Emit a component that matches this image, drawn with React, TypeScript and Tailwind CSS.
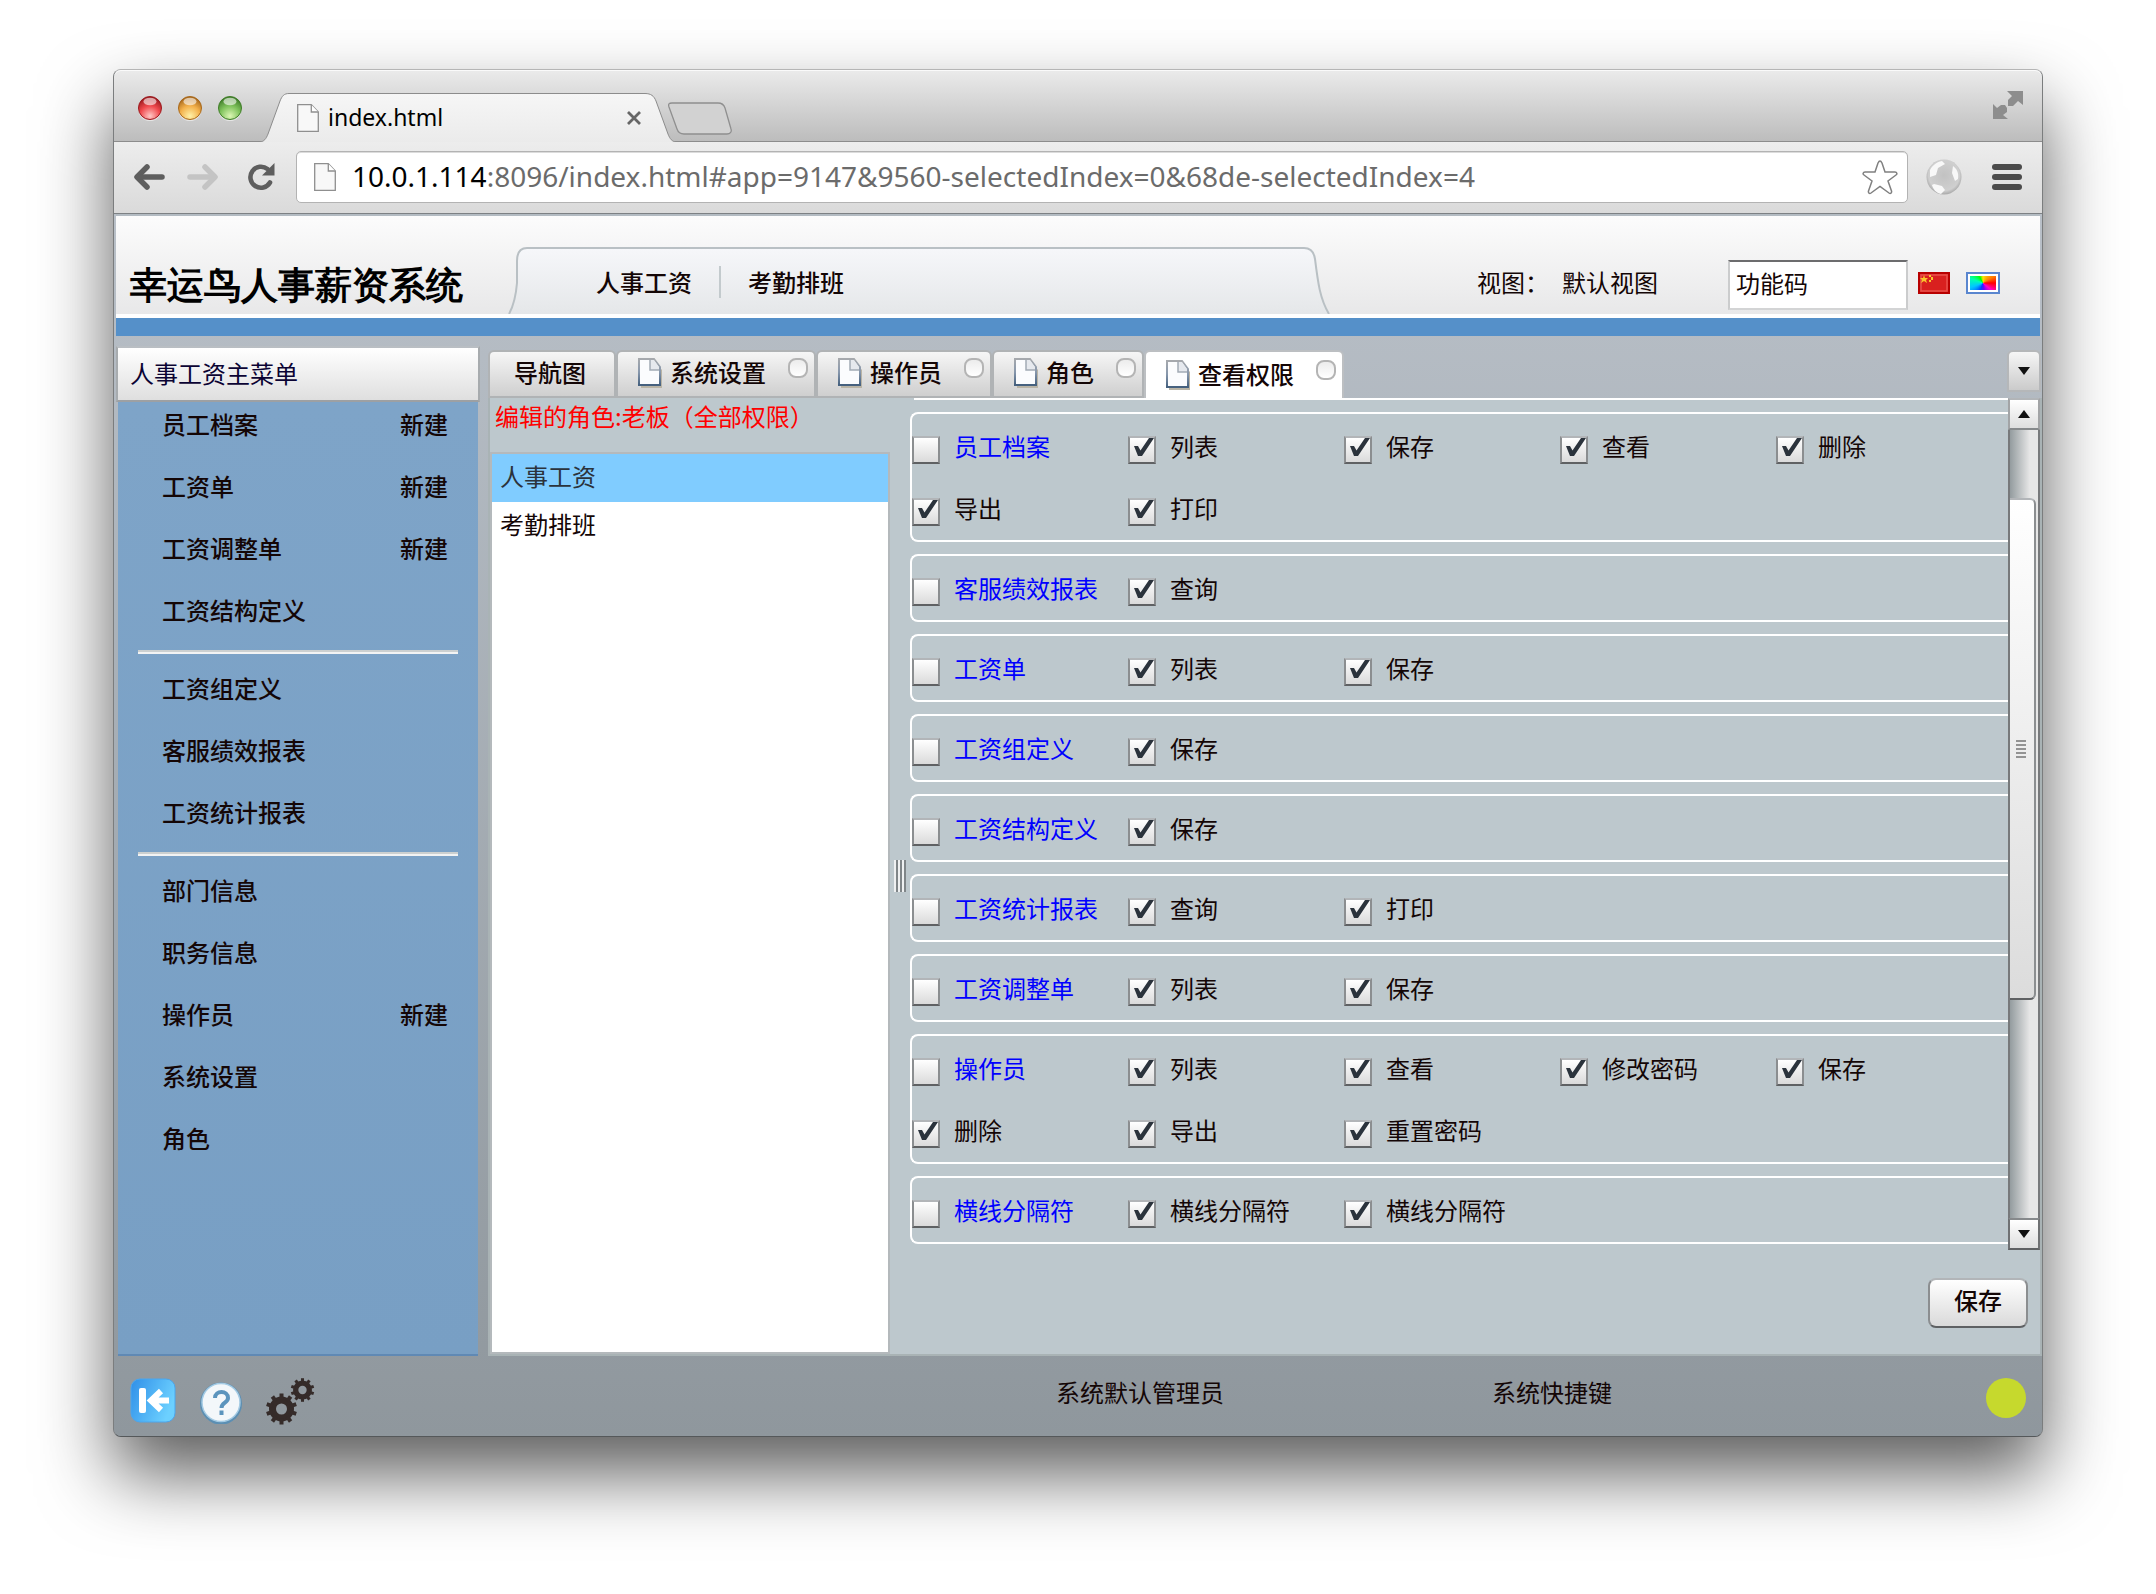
import { useState } from 'react'

type MenuEntry = { name: string; create?: boolean }
type Group = { name: string; rows: string[][] }

const MENU: MenuEntry[][] = [
  [
    { name: '员工档案', create: true },
    { name: '工资单', create: true },
    { name: '工资调整单', create: true },
    { name: '工资结构定义' },
  ],
  [{ name: '工资组定义' }, { name: '客服绩效报表' }, { name: '工资统计报表' }],
  [
    { name: '部门信息' },
    { name: '职务信息' },
    { name: '操作员', create: true },
    { name: '系统设置' },
    { name: '角色' },
  ],
]

const TABS = ['导航图', '系统设置', '操作员', '角色', '查看权限']

const MODULES = ['人事工资', '考勤排班']

const GROUPS: Group[] = [
  { name: '员工档案', rows: [['列表', '保存', '查看', '删除'], ['导出', '打印']] },
  { name: '客服绩效报表', rows: [['查询']] },
  { name: '工资单', rows: [['列表', '保存']] },
  { name: '工资组定义', rows: [['保存']] },
  { name: '工资结构定义', rows: [['保存']] },
  { name: '工资统计报表', rows: [['查询', '打印']] },
  { name: '工资调整单', rows: [['列表', '保存']] },
  { name: '操作员', rows: [['列表', '查看', '修改密码', '保存'], ['删除', '导出', '重置密码']] },
  { name: '横线分隔符', rows: [['横线分隔符', '横线分隔符']] },
]

function TrafficLight({ id, dark, mid, light }: { id: string; dark: string; mid: string; light: string }) {
  return (
    <button aria-label={id} className="block h-[26px] w-6">
      <svg viewBox="0 0 24 26" className="h-full w-full">
        <defs>
          <radialGradient id={id} cx="0.5" cy="0.85" r="0.8">
            <stop offset="0" stopColor={light} />
            <stop offset="0.55" stopColor={mid} />
            <stop offset="1" stopColor={dark} />
          </radialGradient>
        </defs>
        <circle cx="12" cy="13.5" r="11.5" fill="#fff" opacity="0.5" />
        <circle cx="12" cy="12" r="11.5" fill={`url(#${id})`} stroke={dark} />
        <ellipse cx="12" cy="5.5" rx="6.5" ry="3.8" fill="#fff" opacity="0.6" />
      </svg>
    </button>
  )
}

function PageIcon({ className }: { className: string }) {
  return (
    <svg viewBox="0 0 22 30" className={className}>
      <path d="M0.7 1.7h13.6l7 7.3v19.3H0.7z" fill="#f8f8f8" stroke="#8f8f8f" strokeWidth="1.3" />
      <path d="M14.3 1.7v7.3h7" fill="#fff" stroke="#8f8f8f" strokeWidth="1.3" />
    </svg>
  )
}

function DocIcon() {
  return (
    <svg viewBox="0 0 24 30" className="h-[30px] w-6 shrink-0">
      <defs>
        <linearGradient id="doc-edge" x1="0" y1="0" x2="0" y2="1">
          <stop offset="0" stopColor="#a6a9ad" />
          <stop offset="0.5" stopColor="#8797ac" />
          <stop offset="1" stopColor="#46617f" />
        </linearGradient>
      </defs>
      <path d="M3 30V4h14l7 8v18z" fill="#b9b4a6" />
      <path d="M1 1h15l6 8v18H1z" fill="#fbfcfe" stroke="url(#doc-edge)" strokeWidth="2" />
      <path d="M0 27h22" stroke="#46617f" strokeWidth="2" />
      <path d="M12 2v10h9V9l-5-7z" fill="#e6e9ee" />
      <path d="M12 2v10h9" fill="none" stroke="#a3aab5" strokeWidth="1.500" />
    </svg>
  )
}

function BrowserTabs() {
  return (
    <div className="flex h-[72px] items-end rounded-t-[7px] bg-gradient-to-b from-[#ebebeb] to-[#bcbcbc] shadow-[inset_0_1px_0_#fafafa,inset_0_-1px_0_#8c8c8c]">
      <div className="flex w-[146px] gap-4 self-start pt-[26px] pl-6">
        <TrafficLight id="close" dark="#9c1a1e" mid="#f0494d" light="#ffc9c6" />
        <TrafficLight id="minimize" dark="#a8681b" mid="#f3b04a" light="#fff2a8" />
        <TrafficLight id="zoom" dark="#3f7d28" mid="#7fc25c" light="#dcf7b4" />
      </div>
      <div className="relative flex h-[49px] w-[416px] items-center pr-[34px] pl-[37px]">
        <svg viewBox="0 0 416 49" className="absolute inset-0 h-full w-full">
          <defs>
            <linearGradient id="tab" x1="0" y1="0" x2="0" y2="1">
              <stop offset="0" stopColor="#f6f6f6" />
              <stop offset="1" stopColor="#ebebeb" />
            </linearGradient>
          </defs>
          <path
            d="M0 49C4 48.500 6 46 8 41L20 8C22 3 24 0.500 29 0.500H385C391 0.500 394 3 396 8L408 41C410 46 412 48.500 416 49"
            fill="url(#tab)"
            stroke="#8c8c8c"
          />
        </svg>
        <PageIcon className="relative h-[30px] w-[22px]" />
        <span className="relative ml-[9px] flex-1 text-[23px] text-black">index.html</span>
        <button aria-label="Close tab" className="relative">
          <svg viewBox="0 0 16 16" className="h-4 w-4">
            <path d="M2 2l12 12M14 2L2 14" stroke="#666" strokeWidth="2.800" />
          </svg>
        </button>
      </div>
      <button aria-label="New tab" className="-ml-2 self-start pt-8">
        <svg viewBox="0 0 64 33" className="h-[33px] w-16">
          <path
            d="M4 1H50C54 1 56 3 57 6L63 27C64 30 62 32 59 32H16C12 32 10 30 9 27L1 5C0 2 1 1 4 1z"
            fill="#d2d2d2"
            stroke="#8f8f8f"
            strokeWidth="1.300"
          />
        </svg>
      </button>
      <button aria-label="Full screen" className="mr-[19px] ml-auto self-start pt-[21px]">
        <svg viewBox="0 0 30 28" className="h-7 w-[30px]" fill="#8d8d8d">
          <path d="M14 0h16v14l-5-4-5 5h-5V9l4-4z" />
          <path d="M0 28V13l4 4 4-3 4 0 2 3v4l-4 3 5 4z" />
        </svg>
      </button>
    </div>
  )
}

function Toolbar() {
  return (
    <div className="flex h-[72px] items-center border-b border-[#7d8184] bg-gradient-to-b from-[#ededed] to-[#dadada] pr-5 pb-[2px] pl-[18px]">
      <button aria-label="Back">
        <svg viewBox="0 0 34 28" className="h-7 w-[34px]" fill="none" stroke="#5e5e5e" strokeWidth="5.500" strokeLinecap="round">
          <path d="M15 4L5 14l10 10" strokeLinejoin="round" />
          <path d="M6 14h24" />
        </svg>
      </button>
      <button aria-label="Forward" className="ml-5">
        <svg viewBox="0 0 34 28" className="h-7 w-[34px]" fill="none" stroke="#c4c4c4" strokeWidth="5.500" strokeLinecap="round">
          <path d="M19 4l10 10-10 10" strokeLinejoin="round" />
          <path d="M28 14H4" />
        </svg>
      </button>
      <button aria-label="Reload" className="ml-[27px]">
        <svg viewBox="0 0 28 28" className="h-7 w-7">
          <path d="M23 19.500A10.500 10.500 0 1 1 20.500 6" fill="none" stroke="#5e5e5e" strokeWidth="4.600" strokeLinecap="round" />
          <path d="M27.500 0v12.500H15z" fill="#5e5e5e" />
        </svg>
      </button>
      <div className="ml-[21px] flex h-[52px] flex-1 items-center rounded-[5px] border border-[#b3b3b3] bg-white pr-[9px] pl-[17px] shadow-[inset_0_1px_0_#dcdcdc]">
        <PageIcon className="h-[30px] w-[22px]" />
        <div className="ml-4 flex-1 pb-[2px] text-[28px] whitespace-nowrap text-[#6b6b6b]">
          <span className="text-black">10.0.1.114</span>:8096/index.html#app=9147&amp;9560-selectedIndex=0&amp;68de-selectedIndex=4
        </div>
        <button aria-label="Bookmark">
          <svg viewBox="0 0 36 36" className="h-9 w-9">
            <path
              d="M18 2c1 0 1.500 1 2 2l3 9 10 0c2 0 2.500 2 1 3l-8 6 3.500 10c.5 2-1 3-2.500 2L18 27.500 9 34c-1.500 1-3 0-2.500-2L10 22l-8-6c-1.500-1-1-3 1-3h10l3-9c.5-1 1-2 2-2z"
              fill="#fff"
              stroke="#808080"
              strokeWidth="1.500"
            />
          </svg>
        </button>
      </div>
      <svg viewBox="0 0 38 38" className="ml-[17px] h-[38px] w-[38px]">
        <defs>
          <radialGradient id="globe" cx="0.5" cy="0.45" r="0.55">
            <stop offset="0" stopColor="#c2c2c2" />
            <stop offset="0.8" stopColor="#cfcfcf" />
            <stop offset="1" stopColor="#a8a8a8" />
          </radialGradient>
        </defs>
        <circle cx="19" cy="19" r="17.500" fill="url(#globe)" />
        <path d="M5 12c2-4 6-8 12-9l3 3-7 4-2 7-6 2zM28 8c4 3 6 7 5 13l-3 2-3-8zM9 26l8 2 3 4-4 4c-5-1-8-5-9-9z" fill="#f8f8f8" />
      </svg>
      <button aria-label="Menu" className="ml-[29px] flex flex-col gap-1">
        <span className="block h-[6px] w-[30px] rounded-[3px] bg-[#4b4b4b]" />
        <span className="block h-[6px] w-[30px] rounded-[3px] bg-[#4b4b4b]" />
        <span className="block h-[6px] w-[30px] rounded-[3px] bg-[#4b4b4b]" />
      </button>
    </div>
  )
}

function AppHeader() {
  return (
    <header className="mx-[2px] border-t-2 border-[#b3bbc2]">
      <div className="flex h-[98px] items-end bg-gradient-to-b from-[#fcfcfc] to-[#e8e8e9]">
        <h1 className="w-[392px] pb-[9px] pl-[14px] font-serif text-[37px] leading-[38px] font-black whitespace-nowrap text-black">
          幸运鸟人事薪资系统
        </h1>
        <nav className="relative flex h-[67px] w-[822px] items-center pt-[2px] pl-[88px] font-medium">
          <svg viewBox="0 0 822 67" preserveAspectRatio="none" className="absolute inset-0 h-full w-full">
            <defs>
              <linearGradient id="nav" x1="0" y1="0" x2="0" y2="1">
                <stop offset="0" stopColor="#f6f7fa" />
                <stop offset="1" stopColor="#e5e7e9" />
              </linearGradient>
            </defs>
            <path
              d="M1 67C6 58 8 48 9 36V14C9 6 12 1 19 1H796C803 1 806 5 807 12C810 36 812 52 821 67"
              fill="url(#nav)"
              stroke="#b9c0c4"
              strokeWidth="2"
            />
          </svg>
          <a href="#hr" className="relative">人事工资</a>
          <span className="relative mx-[27px] h-8 w-[2px] bg-[#c3cacd]" />
          <a href="#attendance" className="relative">考勤排班</a>
        </nav>
        <div className="mb-1 flex h-[50px] flex-1 items-center justify-end pr-10">
          <span className="pb-[6px]">视图：</span>
          <span className="mr-[70px] ml-[13px] pb-[6px]">默认视图</span>
          <input
            aria-label="功能码"
            defaultValue="功能码"
            className="h-[50px] w-[180px] border-2 border-t-[#6c6c6e] border-r-[#cbcccd] border-b-[#d3d4d5] border-l-[#cbcccd] bg-white px-[6px] pb-[6px] outline-none"
          />
          <button aria-label="中文" className="ml-[10px] pb-1">
            <svg viewBox="0 0 32 22" className="h-[22px] w-8">
              <rect x="1" y="1" width="30" height="20" fill="#d9201f" stroke="#b80000" strokeWidth="2" />
              <rect x="3" y="3" width="26" height="16" fill="none" stroke="#e8504c" strokeWidth="1.500" />
              <path d="M6 3l1 3h3L8 8l1 3-3-2-3 2 1-3-2-2h3zM11 3h2v2h-2zM13 5h2v3h-2zM11 8h2v2h-2z" fill="#f9c62b" />
            </svg>
          </button>
          <button aria-label="主题" className="mb-1 ml-4 border-2 border-[#5a86cf] bg-white p-[2px]">
            <span className="block h-[14px] w-[26px] bg-[conic-gradient(from_0deg,#ffe600,#ff7a00_60deg,#ff0000_90deg,#ff00c8_130deg,#6a00ff_170deg,#0040ff_200deg,#00c8ff_250deg,#00ffb0_290deg,#00ff00_330deg,#ffe600)]" />
          </button>
        </div>
      </div>
      <div className="h-1 bg-white" />
      <div className="h-[18px] bg-[#5590c9]" />
    </header>
  )
}

function Sidebar() {
  return (
    <aside className="ml-[2px] flex w-[364px] shrink-0 flex-col pt-[10px]">
      <h2 className="flex h-[56px] items-center border-2 border-t-[#b9bec3] border-r-[#a7abae] border-b-[#9da0a3] border-l-[#a7abae] bg-gradient-to-b from-white to-[#dfdfdf] pb-[2px] pl-3 text-[#0b0333]">
        人事工资主菜单
      </h2>
      <div className="mx-[2px] flex-1 border-b-2 border-[#6089b4] bg-gradient-to-b from-[#7ea4c8] to-[#789fc4] font-medium">
        {MENU.map((section, i) => (
          <div key={i}>
            {i > 0 && <hr className="mx-5 mt-[14px] mb-3 h-1 border-0 border-t-2 border-[#ccd0d0] bg-[#f2f3f3]" />}
            <ul className="flex flex-col gap-[14px]">
              {section.map((entry) => (
                <li key={entry.name} className="flex h-12 items-center justify-between pr-[30px] pb-1 pl-11">
                  <a href="#open">{entry.name}</a>
                  {entry.create && <a href="#new">新建</a>}
                </li>
              ))}
            </ul>
          </div>
        ))}
      </div>
    </aside>
  )
}

function TabStrip({ active, onSelect }: { active: number; onSelect: (i: number) => void }) {
  return (
    <div className="flex h-[62px] pt-[14px]">
      <div role="tablist" className="flex">
        {TABS.map((tab, i) => (
          <button
            key={tab}
            role="tab"
            aria-selected={i === active}
            onClick={() => onSelect(i)}
            className={
              i === active
                ? 'flex h-12 rounded-t-[6px] border-2 border-b-0 border-[#bcbfc2] bg-white pt-[2px] font-medium'
                : 'flex h-12 rounded-t-[6px] border-2 border-[#b0b3b5] bg-gradient-to-b from-[#f6f6f6] to-[#cfcfcf] font-medium'
            }
          >
            {i === 0 ? (
              <span className="pt-2 pr-7 pl-6">{tab}</span>
            ) : (
              <span className="flex pr-[6px] pl-5">
                <span className="pt-[6px]">
                  <DocIcon />
                </span>
                <span className="mr-[22px] ml-2 pt-2">{tab}</span>
                <span className="mt-[6px] h-5 w-5 rounded-[8px] border-2 border-[#b4b4b4] bg-gradient-to-b from-[#ececec] to-white" />
              </span>
            )}
          </button>
        ))}
      </div>
      <button
        aria-label="All tabs"
        className="mr-px ml-auto flex h-[42px] w-[34px] items-center justify-center rounded-t-[6px] border-2 border-[#b5b7b9] bg-gradient-to-b from-[#f6f6f6] to-[#cbcbcb]"
      >
        <Triangle />
      </button>
    </div>
  )
}

function Triangle({ up = false }: { up?: boolean }) {
  return (
    <svg viewBox="0 0 12 8" className="h-2 w-3">
      <path d={up ? 'M0 8L6 0l6 8z' : 'M0 0l6 8 6-8z'} fill="#111" />
    </svg>
  )
}

function Check({ label, checked, heading = false }: { label: string; checked: boolean; heading?: boolean }) {
  return (
    <label className="flex h-7 w-[216px] items-center">
      <span className="relative h-7 w-7">
        <input
          type="checkbox"
          defaultChecked={checked}
          className="peer block h-7 w-7 appearance-none border-2 border-t-[#b2b5b8] border-r-[#8b8e90] border-b-[#5f6163] border-l-[#8b8e90] bg-gradient-to-b from-white to-[#dadada]"
        />
        <svg viewBox="0 0 28 28" className="pointer-events-none absolute inset-0 hidden h-7 w-7 peer-checked:block">
          <path d="M6 10h4l2.500 4.500L21 2h5L14 20h-4z" fill="#2b333c" />
        </svg>
      </span>
      <span className={heading ? 'ml-[14px] pb-2 text-[#0000ff]' : 'ml-[14px] pb-2'}>{label}</span>
    </label>
  )
}

function PermissionGroup({ group }: { group: Group }) {
  return (
    <fieldset className="flex flex-col gap-[34px] rounded-l-[8px] border-2 border-r-0 border-white pt-[22px] pb-[14px]">
      {group.rows.map((row, i) => (
        <div key={i} className="flex">
          {i === 0 && <Check label={group.name} checked={false} heading />}
          {row.map((action, j) => (
            <Check key={j} label={action} checked />
          ))}
        </div>
      ))}
    </fieldset>
  )
}

function ScrollBar() {
  return (
    <div className="flex w-8 flex-col">
      <button
        aria-label="Scroll up"
        className="flex h-8 items-center justify-center border-2 border-t-[#b2b5b8] border-r-[#a2a4a6] border-b-[#86898b] border-l-[#a2a4a6] bg-gradient-to-b from-white to-[#dedede]"
      >
        <Triangle up />
      </button>
      <div className="flex-1 border-x-2 border-[#77797b] bg-gradient-to-r from-[#949c9f] to-[#e6e6e6] to-70% pt-[68px]">
        <div className="flex h-[502px] w-[26px] flex-col items-center justify-center gap-[2px] rounded-r-[6px] border-2 border-l-0 border-t-[#b2b5b8] border-r-[#8b8e90] border-b-[#5f6163] bg-gradient-to-b from-white to-[#dcdcdc] pr-[2px]">
          {Array.from({ length: 5 }).map((_, i) => (
            <span key={i} className="h-[2px] w-[10px] bg-[#939393]" />
          ))}
        </div>
      </div>
      <button
        aria-label="Scroll down"
        className="flex h-8 items-center justify-center border-2 border-t-[#86898b] border-r-[#6f7173] border-b-[#5f6163] border-l-[#6f7173] bg-gradient-to-b from-white to-[#dedede]"
      >
        <Triangle />
      </button>
    </div>
  )
}

function RolePanel() {
  const [module, setModule] = useState(0)
  return (
    <div className="flex flex-1 border-2 border-t-0 border-[#a9b3b5] bg-[#bdc8cd]">
      <div className="flex w-[400px] shrink-0 flex-col">
        <p className="h-[54px] pt-[6px] pl-[5px] whitespace-nowrap text-[#ff0000]">编辑的角色:老板（全部权限）</p>
        <ul className="flex-1 border-2 border-[#b4b9bc] bg-white">
          {MODULES.map((name, i) => (
            <li key={name}>
              <button
                onClick={() => setModule(i)}
                className={
                  i === module
                    ? 'block h-12 w-full bg-[#80ccff] pb-1 pl-2 text-left text-[#2b333c]'
                    : 'block h-12 w-full pb-1 pl-2 text-left'
                }
              >
                {name}
              </button>
            </li>
          ))}
        </ul>
      </div>
      <div className="flex w-5 shrink-0 items-center pl-1">
        <div className="flex h-8">
          {Array.from({ length: 3 }).map((_, i) => (
            <span key={i} className="w-1 border-r-2 border-[#7f8588] bg-[#eef0f1]" />
          ))}
        </div>
      </div>
      <div className="flex min-w-0 flex-1 flex-col">
        <div className="flex">
          <div className="flex min-w-0 flex-1 flex-col gap-3 overflow-hidden pb-[6px]">
            <div className="ml-1 h-[2px] bg-white" />
            {GROUPS.map((group) => (
              <PermissionGroup key={group.name} group={group} />
            ))}
          </div>
          <ScrollBar />
        </div>
        <button className="mt-7 mr-3 mb-[26px] h-[50px] w-[100px] self-end rounded-[8px] border-2 border-t-[#b2b5b8] border-r-[#8b8e90] border-b-[#5f6163] border-l-[#8b8e90] bg-gradient-to-b from-white to-[#dadada] pb-[6px] font-medium">
          保存
        </button>
      </div>
    </div>
  )
}

const GEAR_TEETH = [0, 36, 72, 108, 144, 180, 216, 252, 288, 324]

function Gear({ x, y, scale }: { x: number; y: number; scale: number }) {
  return (
    <g transform={`translate(${x} ${y}) scale(${scale})`}>
      <circle r="9" fill="none" stroke="#352b29" strokeWidth="7" />
      {GEAR_TEETH.map((a) => (
        <rect key={a} x="-2" y="-15.500" width="4" height="6" fill="#352b29" transform={`rotate(${a})`} />
      ))}
    </g>
  )
}

function StatusBar() {
  return (
    <footer className="grid h-20 grid-cols-[942px_436px_1fr] items-start">
      <div className="flex gap-[22px] pt-[21px] pl-4">
        <button aria-label="收起">
          <svg viewBox="0 0 46 46" className="h-[46px] w-[46px]">
            <defs>
              <linearGradient id="collapse" x1="0" y1="0" x2="1" y2="0.4">
                <stop offset="0" stopColor="#2f8fe8" />
                <stop offset="1" stopColor="#6cd0ff" />
              </linearGradient>
            </defs>
            <rect x="1" y="1" width="44" height="43" rx="9" fill="url(#collapse)" stroke="#4aa6ee" />
            <rect x="9" y="10" width="7" height="25" rx="2" fill="#fff" />
            <path d="M31 13L21 22.500l10 9.500M22 22.500h17" fill="none" stroke="#fff" strokeWidth="6" />
          </svg>
        </button>
        <button aria-label="帮助">
          <svg viewBox="0 0 46 46" className="h-[46px] w-[46px]">
            <circle cx="23" cy="25.500" r="21" fill="#5c8fb3" />
            <circle cx="23" cy="24.500" r="19" fill="#f3f7fa" stroke="#a5cbe4" strokeWidth="1.500" />
            <path d="M17 20c0-8 13-8 13 0 0 5-6.500 4.500-6.500 10" fill="none" stroke="#5b94bd" strokeWidth="4" />
            <rect x="21.500" y="32.500" width="4" height="4.500" fill="#5b94bd" />
          </svg>
        </button>
        <button aria-label="设置">
          <svg viewBox="0 0 50 48" className="h-12 w-[50px]">
            <Gear x={15.5} y={32} scale={1} />
            <Gear x={36.5} y={13} scale={0.76} />
          </svg>
        </button>
      </div>
      <span className="pt-6">系统默认管理员</span>
      <div className="flex justify-between pr-4">
        <span className="pt-6">系统快捷键</span>
        <span className="mt-[22px] h-10 w-10 rounded-full bg-[#c6d92d]" />
      </div>
    </footer>
  )
}

export default function App() {
  const [activeTab, setActiveTab] = useState(4)
  return (
    <div className="min-h-screen overflow-hidden bg-white px-[113px] pt-[69px] pb-[157px] font-['Noto_Sans','Noto_Sans_CJK_SC',sans-serif]">
      <div className="rounded-[8px] border border-t-[#b5b5b5] border-r-[#7b7d7e] border-b-[#55585a] border-l-[#7b7d7e] bg-[#8f979d] shadow-[0_37px_72px_rgba(0,0,0,0.64)]">
        <BrowserTabs />
        <Toolbar />
        <div className="rounded-b-[7px] bg-gradient-to-b from-[#b9c0c8] to-[#8f979d] font-['Noto_Sans_CJK_SC',sans-serif] text-[24px] leading-[24px] text-[#140606]">
          <AppHeader />
          <div className="flex">
            <Sidebar />
            <div className="ml-2 flex min-w-0 flex-1 flex-col">
              <TabStrip active={activeTab} onSelect={setActiveTab} />
              <RolePanel />
            </div>
          </div>
          <StatusBar />
        </div>
      </div>
    </div>
  )
}
